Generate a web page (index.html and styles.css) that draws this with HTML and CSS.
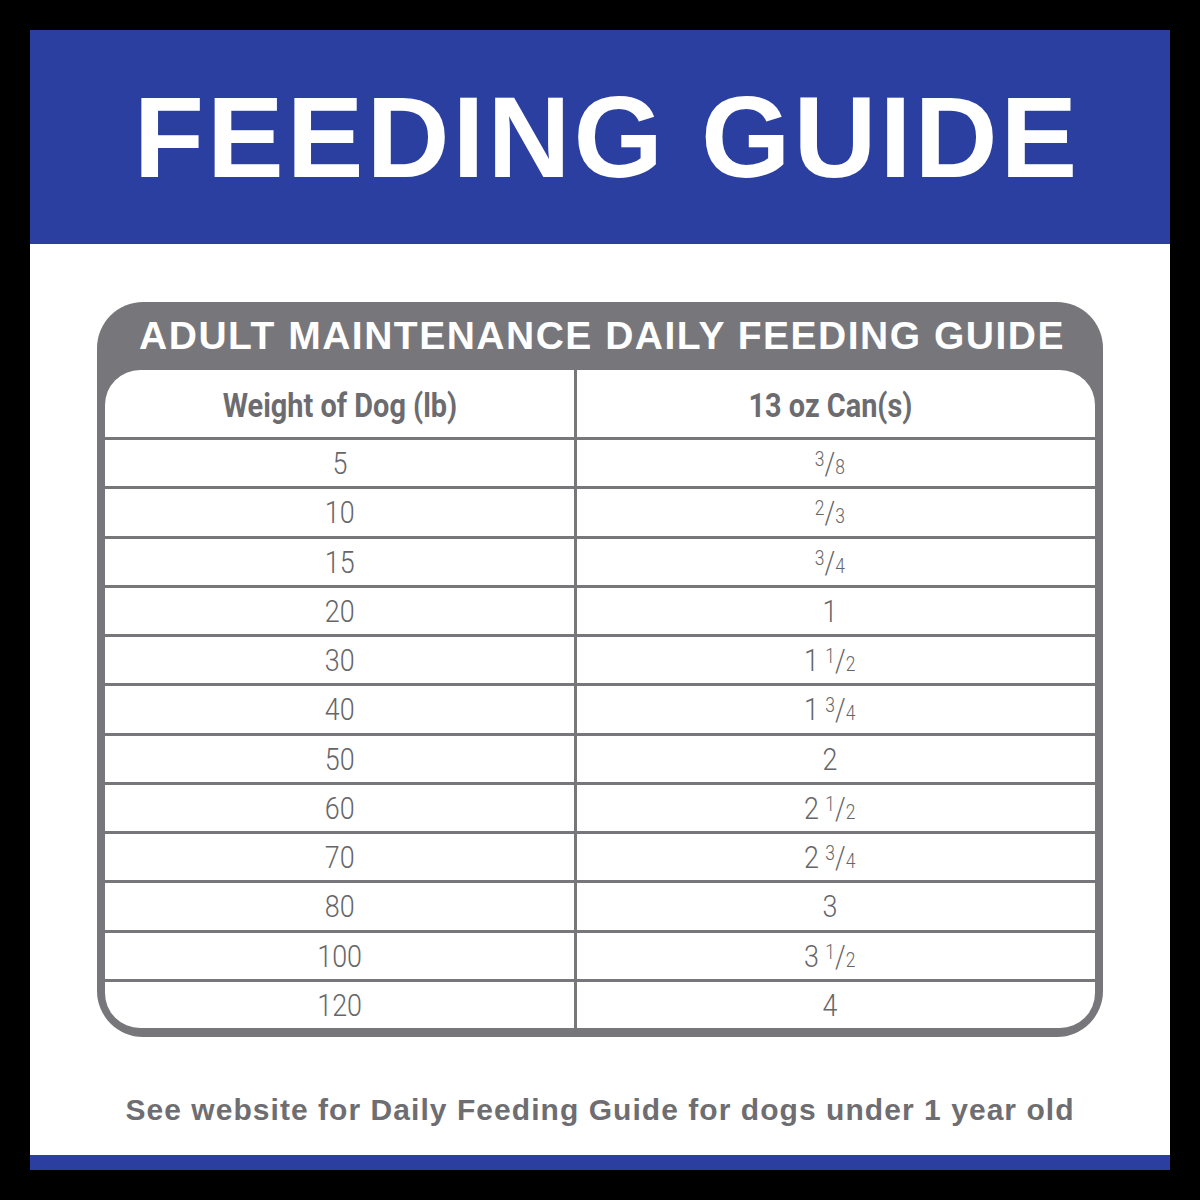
FILE: index.html
```html
<!DOCTYPE html>
<html>
<head>
<meta charset="utf-8">
<link rel="stylesheet" href="styles.css">
</head>
<body>
<div class="panel">
  <header class="hero"><h1 class="hero-title">FEEDING GUIDE</h1></header>
  <main class="main">
    <section class="card">
      <h2 class="card-title">ADULT MAINTENANCE DAILY FEEDING GUIDE</h2>
      <div class="grid">
        <div class="cell head"><span class="t">Weight of Dog (lb)</span></div>
        <div class="cell head"><span class="t">13 oz Can(s)</span></div>
        <div class="cell"><span class="t">5</span></div><div class="cell"><span class="t"><span class="num">3</span>/<span class="den">8</span></span></div>
        <div class="cell"><span class="t">10</span></div><div class="cell"><span class="t"><span class="num">2</span>/<span class="den">3</span></span></div>
        <div class="cell"><span class="t">15</span></div><div class="cell"><span class="t"><span class="num">3</span>/<span class="den">4</span></span></div>
        <div class="cell"><span class="t">20</span></div><div class="cell"><span class="t">1</span></div>
        <div class="cell"><span class="t">30</span></div><div class="cell"><span class="t">1 <span class="num">1</span>/<span class="den">2</span></span></div>
        <div class="cell"><span class="t">40</span></div><div class="cell"><span class="t">1 <span class="num">3</span>/<span class="den">4</span></span></div>
        <div class="cell"><span class="t">50</span></div><div class="cell"><span class="t">2</span></div>
        <div class="cell"><span class="t">60</span></div><div class="cell"><span class="t">2 <span class="num">1</span>/<span class="den">2</span></span></div>
        <div class="cell"><span class="t">70</span></div><div class="cell"><span class="t">2 <span class="num">3</span>/<span class="den">4</span></span></div>
        <div class="cell"><span class="t">80</span></div><div class="cell"><span class="t">3</span></div>
        <div class="cell"><span class="t">100</span></div><div class="cell"><span class="t">3 <span class="num">1</span>/<span class="den">2</span></span></div>
        <div class="cell"><span class="t">120</span></div><div class="cell"><span class="t">4</span></div>
      </div>
    </section>
    <p class="note">See website for Daily Feeding Guide for dogs under 1 year old</p>
  </main>
  <footer class="bottom-bar"></footer>
</div>
</body>
</html>
```
FILE: styles.css
```css
html, body {
  margin: 0;
  padding: 0;
  background: #000;
}
body {
  width: 1200px;
  height: 1200px;
  padding: 30px;
  box-sizing: border-box;
}
.panel {
  width: 1140px;
  height: 1140px;
  background: #fff;
  display: flex;
  flex-direction: column;
}
.hero {
  height: 214px;
  background: #2a3f9f;
  display: flex;
  align-items: center;
  justify-content: center;
}
.hero-title {
  margin: 0;
  padding-left: 14px;
  color: #fff;
  font-family: "Liberation Sans", Arial, sans-serif;
  font-weight: 700;
  font-size: 115px;
  letter-spacing: 3px;
  line-height: 1;
}
.main {
  flex: 1;
  display: flex;
  flex-direction: column;
  align-items: center;
  padding-top: 58px;
}
.card {
  width: 1006px;
  box-sizing: border-box;
  background: #77777b;
  border-radius: 46px;
  padding: 0 8px 9px;
}
.card-title {
  margin: 0;
  height: 68px;
  display: flex;
  align-items: center;
  justify-content: center;
  color: #fff;
  font-family: "Liberation Sans", Arial, sans-serif;
  font-weight: 700;
  font-size: 39px;
  letter-spacing: 1.5px;
  padding-left: 4px;
}
.grid {
  display: grid;
  grid-template-columns: 469px 518px;
  grid-template-rows: 67px repeat(12, 46.25px);
  gap: 3px;
  background: #77777b;
  border-radius: 35px;
  overflow: hidden;
}
.cell {
  background: #fff;
  display: flex;
  align-items: center;
  justify-content: center;
  font-family: Roboto, "Liberation Sans", sans-serif;
  font-weight: 300;
  font-size: 32px;
  color: #666669;
  white-space: pre;
}
.cell .t {
  display: inline-block;
  transform: scaleX(0.84);
}
.cell:nth-child(even) {
  padding-right: 12px;
}
.cell.head {
  font-weight: 700;
  font-size: 34px;
  color: #6c6c70;
  padding-top: 2px;
}
.cell.head .t {
  transform: scaleX(0.85);
}
.num {
  font-size: 0.65em;
  position: relative;
  top: -0.38em;
}
.den {
  font-size: 0.65em;
}
.note {
  margin: 53px 0 0;
  font-family: "Liberation Sans", Arial, sans-serif;
  font-weight: 700;
  font-size: 30px;
  line-height: 40px;
  color: #6e6e72;
  letter-spacing: 1.05px;
}
.bottom-bar {
  height: 15px;
  background: #2a3f9f;
}
```
